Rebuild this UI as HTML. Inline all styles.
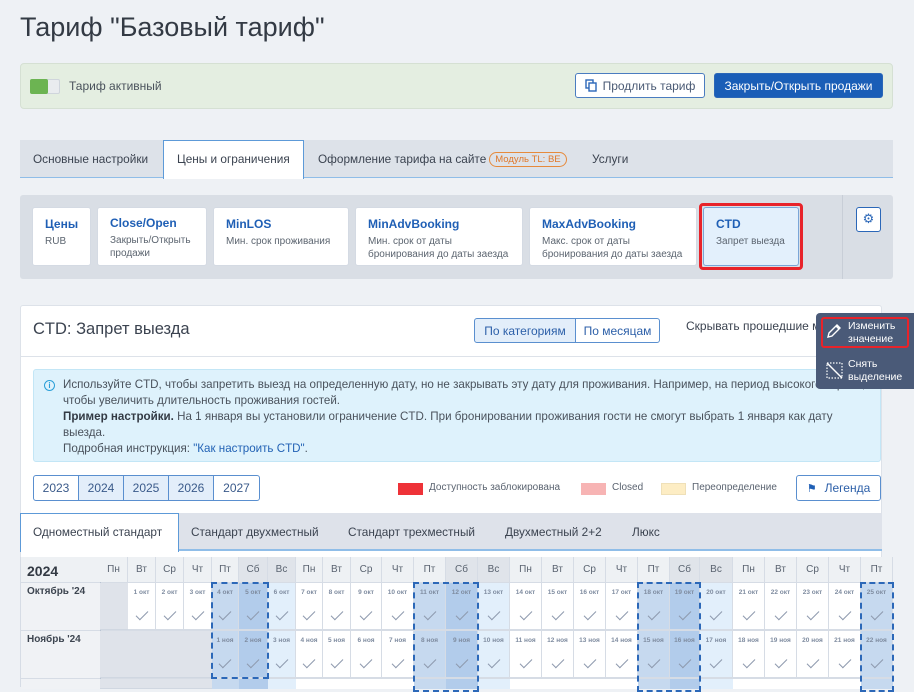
<!DOCTYPE html>
<html><head><meta charset="utf-8"><style>
*{box-sizing:border-box;margin:0;padding:0}
body{width:914px;height:683px;overflow:hidden;background:#eef1f5;font-family:"Liberation Sans","DejaVu Sans",sans-serif;color:#3d4550;position:relative}
.a{position:absolute}
h1{position:absolute;left:20px;top:12px;font-size:27px;font-weight:normal;color:#333a44}
.btn{position:absolute;border:1px solid #2b67b8;border-radius:3px;font-size:12px;display:flex;align-items:center;justify-content:center;white-space:nowrap}
.card{position:absolute;background:#fff;border:1px solid #d4dae3;border-radius:3px;padding:8px 12px}
.card b{display:block;color:#1f5fb5;font-size:12px;margin-top:1px;white-space:nowrap}
.card span{display:block;font-size:10px;color:#5c6570;line-height:13px;margin-top:4px}
.tab{position:absolute;top:140px;height:38px;font-size:11.8px;display:flex;align-items:center;color:#3b4350;white-space:nowrap}
.hd{position:absolute;top:557px;height:25px;font-size:10px;color:#5a6370;display:flex;align-items:center;justify-content:center;border-right:1px solid #d6dce5;background:#eef1f4}
.w{background:#e0e4ea}
.c{position:absolute;height:47px;border-right:1px solid #d6dce5;border-bottom:1px solid #d6dce5;background:#fff;font-size:6.5px;font-weight:bold;color:#7f8ca0;text-align:center;padding-top:6px;white-space:nowrap;overflow:hidden}
.c::after{content:"";position:absolute;left:50%;top:28px;width:11px;height:5px;margin-left:-6px;border-left:1px solid #8e9aae;border-bottom:1px solid #8e9aae;transform:rotate(-45deg)}
.e{position:absolute;height:47px;background:#dfe3ea;border-bottom:1px solid #d0d7e1}
.ro{top:583px}.rn{top:631px}.rx{top:679px;height:10px}
.f{background:#c6d9ef}.s{background:#b2cceb}.u{background:#e2effb}
.dash{position:absolute;border:2px dashed #2c68b8}
.k0{left:100px;width:28px}.k1{left:128px;width:28px}.k2{left:156px;width:28px}.k3{left:184px;width:28px}.k4{left:212px;width:27px}.k5{left:239px;width:29px}.k6{left:268px;width:28px}.k7{left:296px;width:27px}.k8{left:323px;width:28px}.k9{left:351px;width:31px}.k10{left:382px;width:32px}.k11{left:414px;width:32px}.k12{left:446px;width:32px}.k13{left:478px;width:32px}.k14{left:510px;width:32px}.k15{left:542px;width:32px}.k16{left:574px;width:32px}.k17{left:606px;width:32px}.k18{left:638px;width:32px}.k19{left:670px;width:30px}.k20{left:700px;width:33px}.k21{left:733px;width:32px}.k22{left:765px;width:32px}.k23{left:797px;width:32px}.k24{left:829px;width:32px}.k25{left:861px;width:32px}
.lg{position:absolute;top:483px;width:25px;height:12px}
.lt{position:absolute;top:482px;font-size:10px;color:#5a6370}
.info div{white-space:nowrap}
</style></head><body>
<h1>Тариф "Базовый тариф"</h1>

<div class="a" style="left:20px;top:63px;width:873px;height:46px;background:#e4eee1;border:1px solid #d5e0d3;border-radius:4px"></div>
<div class="a" style="left:30px;top:79px;width:30px;height:15px;background:#e9ecef;border:1px solid #cfd5dc;border-radius:2px"></div>
<div class="a" style="left:30px;top:79px;width:18px;height:15px;background:#6cb452;border-radius:2px"></div>
<div class="a" style="left:69px;top:79px;font-size:12px;color:#4a525c">Тариф активный</div>
<div class="btn" style="left:575px;top:73px;width:130px;height:25px;background:#fff;color:#4a5a74;border-color:#4a7cc0"><svg width="12" height="13" viewBox="0 0 12 13" style="margin-right:6px"><rect x="1" y="1" width="7" height="8" fill="none" stroke="#2b67b8" stroke-width="1.4"/><rect x="4" y="4" width="7" height="8" fill="#fff" stroke="#2b67b8" stroke-width="1.4"/></svg>Продлить тариф</div>
<div class="btn" style="left:714px;top:73px;width:169px;height:25px;background:#1a5eb7;color:#fff">Закрыть/Открыть продажи</div>

<div class="a" style="left:20px;top:140px;width:873px;height:38px;background:#dde2e9;border-bottom:1px solid #8fbde8"></div>
<div class="a" style="left:163px;top:140px;width:141px;height:39px;background:#fff;border:1px solid #5d9ad8;border-bottom:none"></div>
<div class="tab" style="left:33px">Основные настройки</div>
<div class="tab" style="left:177px">Цены и ограничения</div>
<div class="tab" style="left:318px">Оформление тарифа на сайте<span style="margin-left:3px;border:1px solid #e68a3c;color:#e0782a;border-radius:9px;font-size:9.5px;padding:1px 5px">Модуль TL: BE</span></div>
<div class="tab" style="left:592px">Услуги</div>

<div class="a" style="left:20px;top:195px;width:873px;height:84px;background:#d9dee5;border-radius:3px"></div>
<div class="a" style="left:842px;top:195px;width:1px;height:84px;background:#c8ced7"></div>
<div class="card" style="left:32px;top:207px;width:59px;height:59px"><b>Цены</b><span>RUB</span></div>
<div class="card" style="left:97px;top:207px;width:110px;height:59px"><b style="margin-top:0">Close/Open</b><span>Закрыть/Открыть продажи</span></div>
<div class="card" style="left:213px;top:207px;width:136px;height:59px"><b>MinLOS</b><span>Мин. срок проживания</span></div>
<div class="card" style="left:355px;top:207px;width:168px;height:59px"><b>MinAdvBooking</b><span>Мин. срок от даты бронирования до даты заезда</span></div>
<div class="card" style="left:529px;top:207px;width:168px;height:59px"><b>MaxAdvBooking</b><span>Макс. срок от даты бронирования до даты заезда</span></div>
<div class="a" style="left:699px;top:203px;width:104px;height:67px;border:3px solid #e8232a;border-radius:4px"></div>
<div class="card" style="left:703px;top:207px;width:96px;height:59px;background:#e3f0fc;border-color:#7aa6d8"><b>CTD</b><span style="white-space:nowrap">Запрет выезда</span></div>
<div class="a" style="left:856px;top:207px;width:25px;height:25px;background:#fff;border:1px solid #2b67b8;border-radius:3px;color:#2b67b8;font-size:13px;text-align:center;line-height:22px">⚙</div>

<div class="a" style="left:20px;top:305px;width:862px;height:380px;background:#fff;border:1px solid #dde2e9;border-radius:3px"></div>
<div class="a" style="left:20px;top:356px;width:862px;height:1px;background:#dde2e9"></div>
<div class="a" style="left:33px;top:320px;font-size:16.5px;color:#3b4350">CTD: Запрет выезда</div>
<div class="btn" style="left:474px;top:318px;width:102px;height:25px;background:#e3eefa;color:#2c5fa8;border-color:#5a8fcf;border-radius:3px 0 0 3px">По категориям</div>
<div class="btn" style="left:575px;top:318px;width:85px;height:25px;background:#fff;color:#2c5fa8;border-color:#5a8fcf;border-radius:0 3px 3px 0">По месяцам</div>
<div class="a" style="left:686px;top:319px;font-size:12px;color:#3b4350;white-space:nowrap">Скрывать прошедшие м</div>

<div class="a" style="left:33px;top:369px;width:848px;height:93px;background:#def2fc;border:1px solid #c3e6f6;border-radius:3px"></div>
<div class="a" style="left:44px;top:380px;width:11px;height:11px;border:1.3px solid #2a9fd8;border-radius:50%;font-size:8px;color:#2a9fd8;text-align:center;line-height:9px;font-weight:bold">i</div>
<div class="a info" style="left:63px;top:377px;width:815px;overflow:hidden;font-size:11.6px;line-height:16px;color:#4a525c">
<div>Используйте CTD, чтобы запретить выезд на определенную дату, но не закрывать эту дату для проживания. Например, на период высокого спроса,</div>
<div>чтобы увеличить длительность проживания гостей.</div>
<div><b style="color:#333a44">Пример настройки.</b> На 1 января вы установили ограничение CTD. При бронировании проживания гости не смогут выбрать 1 января как дату</div>
<div>выезда.</div>
<div>Подробная инструкция: <span style="color:#2262b5">"Как настроить CTD"</span>.</div></div>

<div class="btn" style="left:33px;top:475px;width:46px;height:26px;background:#fff;color:#3a5a8a;border-color:#5a8fcf;border-radius:3px 0 0 3px">2023</div>
<div class="btn" style="left:78px;top:475px;width:46px;height:26px;background:#e3eefa;color:#3a5a8a;border-color:#5a8fcf;border-radius:0">2024</div>
<div class="btn" style="left:123px;top:475px;width:46px;height:26px;background:#e3eefa;color:#3a5a8a;border-color:#5a8fcf;border-radius:0">2025</div>
<div class="btn" style="left:168px;top:475px;width:46px;height:26px;background:#e3eefa;color:#3a5a8a;border-color:#5a8fcf;border-radius:0">2026</div>
<div class="btn" style="left:213px;top:475px;width:47px;height:26px;background:#fff;color:#3a5a8a;border-color:#5a8fcf;border-radius:0 3px 3px 0">2027</div>

<div class="lg" style="left:398px;background:#ee3238"></div><div class="lt" style="left:429px">Доступность заблокирована</div>
<div class="lg" style="left:581px;background:#f7b4b4"></div><div class="lt" style="left:612px">Closed</div>
<div class="lg" style="left:661px;background:#fdedc4;border:1px solid #efe0b8"></div><div class="lt" style="left:692px">Переопределение</div>
<div class="btn" style="left:796px;top:475px;width:85px;height:26px;background:#fff;color:#2c5fa8;border-color:#5a8fcf"><span style="font-size:11px;margin-right:8px;color:#1f5fb5">&#9873;</span>Легенда</div>

<div class="a" style="left:20px;top:513px;width:862px;height:38px;background:#dee2ea;border-bottom:2px solid #8fbde8"></div>
<div class="a" style="left:20px;top:513px;width:159px;height:39px;background:#fff;border:1px solid #5d9ad8;border-bottom:none"></div>
<div class="tab" style="left:33px;top:513px">Одноместный стандарт</div>
<div class="tab" style="left:191px;top:513px">Стандарт двухместный</div>
<div class="tab" style="left:348px;top:513px">Стандарт трехместный</div>
<div class="tab" style="left:505px;top:513px">Двухместный 2+2</div>
<div class="tab" style="left:632px;top:513px">Люкс</div>

<div class="a" style="left:20px;top:557px;width:873px;height:130px;background:#d6dce5"></div>
<div class="a" style="left:21px;top:557px;width:79px;height:25px;background:#eef1f4;font-size:14px;font-weight:bold;color:#333a44;padding:6px 6px">2024</div>
<div class="a" style="left:21px;top:583px;width:79px;height:47px;background:#f0f2f5;font-size:10px;font-weight:bold;color:#3d4550;padding:3px 6px">Октябрь '24</div>
<div class="a" style="left:21px;top:631px;width:79px;height:47px;background:#f0f2f5;font-size:10px;font-weight:bold;color:#3d4550;padding:3px 6px">Ноябрь '24</div>
<div class="a" style="left:21px;top:679px;width:79px;height:10px;background:#f0f2f5"></div>
<div class="a" style="left:100px;top:557px;width:1px;height:130px;background:#b9c4d3"></div>

<div class="hd k0">Пн</div><div class="hd k1">Вт</div><div class="hd k2">Ср</div><div class="hd k3">Чт</div><div class="hd k4">Пт</div><div class="hd k5 w">Сб</div><div class="hd k6 w">Вс</div><div class="hd k7">Пн</div><div class="hd k8">Вт</div><div class="hd k9">Ср</div><div class="hd k10">Чт</div><div class="hd k11">Пт</div><div class="hd k12 w">Сб</div><div class="hd k13 w">Вс</div><div class="hd k14">Пн</div><div class="hd k15">Вт</div><div class="hd k16">Ср</div><div class="hd k17">Чт</div><div class="hd k18">Пт</div><div class="hd k19 w">Сб</div><div class="hd k20 w">Вс</div><div class="hd k21">Пн</div><div class="hd k22">Вт</div><div class="hd k23">Ср</div><div class="hd k24">Чт</div><div class="hd k25">Пт</div>

<div class="e ro k0"></div>
<div class="c ro k1">1 окт</div><div class="c ro k2">2 окт</div><div class="c ro k3">3 окт</div><div class="c ro k4 f">4 окт</div><div class="c ro k5 s">5 окт</div><div class="c ro k6 u">6 окт</div><div class="c ro k7">7 окт</div><div class="c ro k8">8 окт</div><div class="c ro k9">9 окт</div><div class="c ro k10">10 окт</div><div class="c ro k11 f">11 окт</div><div class="c ro k12 s">12 окт</div><div class="c ro k13 u">13 окт</div><div class="c ro k14">14 окт</div><div class="c ro k15">15 окт</div><div class="c ro k16">16 окт</div><div class="c ro k17">17 окт</div><div class="c ro k18 f">18 окт</div><div class="c ro k19 s">19 окт</div><div class="c ro k20 u">20 окт</div><div class="c ro k21">21 окт</div><div class="c ro k22">22 окт</div><div class="c ro k23">23 окт</div><div class="c ro k24">24 окт</div><div class="c ro k25 f">25 окт</div>

<div class="e rn" style="left:100px;width:112px"></div>
<div class="c rn k4 f">1 ноя</div><div class="c rn k5 s">2 ноя</div><div class="c rn k6 u">3 ноя</div><div class="c rn k7">4 ноя</div><div class="c rn k8">5 ноя</div><div class="c rn k9">6 ноя</div><div class="c rn k10">7 ноя</div><div class="c rn k11 f">8 ноя</div><div class="c rn k12 s">9 ноя</div><div class="c rn k13 u">10 ноя</div><div class="c rn k14">11 ноя</div><div class="c rn k15">12 ноя</div><div class="c rn k16">13 ноя</div><div class="c rn k17">14 ноя</div><div class="c rn k18 f">15 ноя</div><div class="c rn k19 s">16 ноя</div><div class="c rn k20 u">17 ноя</div><div class="c rn k21">18 ноя</div><div class="c rn k22">19 ноя</div><div class="c rn k23">20 ноя</div><div class="c rn k24">21 ноя</div><div class="c rn k25 f">22 ноя</div>

<div class="e rx" style="left:100px;width:112px;height:10px"></div>
<div class="a rx" style="left:212px;width:27px;background:#c6d9ef"></div><div class="a rx" style="left:239px;width:29px;background:#b2cceb"></div><div class="a rx" style="left:268px;width:28px;background:#e2effb"></div>
<div class="a rx" style="left:296px;width:118px;background:#fff"></div>
<div class="a rx" style="left:414px;width:32px;background:#c6d9ef"></div><div class="a rx" style="left:446px;width:32px;background:#b2cceb"></div><div class="a rx" style="left:478px;width:32px;background:#e2effb"></div>
<div class="a rx" style="left:510px;width:128px;background:#fff"></div>
<div class="a rx" style="left:638px;width:32px;background:#c6d9ef"></div><div class="a rx" style="left:670px;width:30px;background:#b2cceb"></div><div class="a rx" style="left:700px;width:33px;background:#e2effb"></div>
<div class="a rx" style="left:733px;width:128px;background:#fff"></div>
<div class="a rx" style="left:861px;width:32px;background:#c6d9ef"></div>

<div class="dash" style="left:211px;top:582px;width:58px;height:97px"></div>
<div class="dash" style="left:413px;top:582px;width:66px;height:110px"></div>
<div class="dash" style="left:637px;top:582px;width:64px;height:110px"></div>
<div class="dash" style="left:860px;top:582px;width:34px;height:110px"></div>

<div class="a" style="left:816px;top:313px;width:98px;height:76px;background:#4a5a78;border-radius:4px 0 0 4px"></div>
<div class="a" style="left:821px;top:317px;width:88px;height:31px;border:2.5px solid #e8232a;border-radius:3px"></div>
<svg class="a" style="left:826px;top:323px" width="16" height="16" viewBox="0 0 16 16"><path d="M2 14 L3 10 L11 2 L14 5 L6 13 Z M10 3 L13 6" fill="none" stroke="#fff" stroke-width="1.4"/></svg>
<div class="a" style="left:848px;top:320px;font-size:10.5px;line-height:13px;color:#fff">Изменить<br>значение</div>
<svg class="a" style="left:826px;top:362px" width="17" height="17" viewBox="0 0 17 17"><rect x="1" y="1" width="15" height="15" fill="none" stroke="#fff" stroke-width="1.2" stroke-dasharray="1.5 1.5"/><path d="M1 1 L16 16" stroke="#fff" stroke-width="1.4"/></svg>
<div class="a" style="left:848px;top:358px;font-size:10.5px;line-height:13px;color:#fff">Снять<br>выделение</div>
</body></html>
